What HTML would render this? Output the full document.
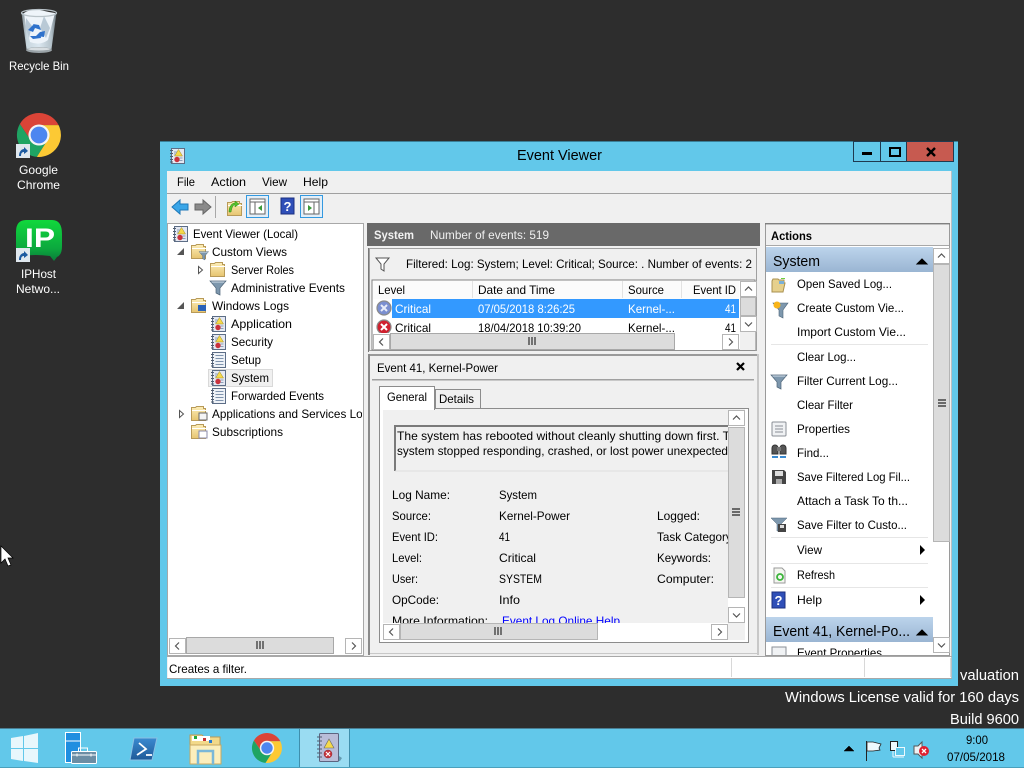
<!DOCTYPE html>
<html><head><meta charset="utf-8"><title>Event Viewer</title>
<style>
html,body{margin:0;padding:0;background:#2d2d2d;overflow:hidden}
svg{display:block;position:absolute;left:0;top:0}
text{font-family:"Liberation Sans",sans-serif;font-size:12px;fill:#000;white-space:pre}
.w{fill:#fff;font-size:12px}
.wm{fill:#fff;font-size:14.5px}
.b{font-weight:bold}
</style></head><body>
<svg width="1024" height="768" viewBox="0 0 1024 768" xmlns="http://www.w3.org/2000/svg">
<defs>
<linearGradient id="hd" x1="0" y1="0" x2="0" y2="1"><stop offset="0" stop-color="#bcd4ec"/><stop offset="1" stop-color="#9ab5d3"/></linearGradient>
<linearGradient id="fold" x1="0" y1="0" x2="0" y2="1"><stop offset="0" stop-color="#fdeeb8"/><stop offset="1" stop-color="#e6c470"/></linearGradient>
<linearGradient id="ipg" x1="0" y1="0" x2="0" y2="1"><stop offset="0" stop-color="#10d83c"/><stop offset=".7" stop-color="#0ca83e"/><stop offset="1" stop-color="#0a7c3a"/></linearGradient>
<linearGradient id="bin" x1="0" y1="0" x2="1" y2="0"><stop offset="0" stop-color="#7f8a90"/><stop offset=".15" stop-color="#c8d6de"/><stop offset=".5" stop-color="#dbe7f0"/><stop offset=".85" stop-color="#b4c2ca"/><stop offset="1" stop-color="#68737a"/></linearGradient>
<linearGradient id="pshell" x1="0" y1="0" x2="0" y2="1"><stop offset="0" stop-color="#3a8ad0"/><stop offset="1" stop-color="#1f5a98"/></linearGradient>
<clipPath id="c-tree"><rect x="168" y="224" width="194" height="412"/></clipPath>
<clipPath id="c-list"><rect x="372" y="281" width="367" height="52"/></clipPath>
<clipPath id="c-det"><rect x="383" y="410" width="345" height="213"/></clipPath>
<clipPath id="c-act"><rect x="766" y="247" width="167" height="408"/></clipPath>
<symbol id="chrome" viewBox="-1 -1 2 2" overflow="visible">
<path d="M.89-.45A1 1 0 0 0-.87-.5L-.39.22 0-.45Z" fill="#db4437"/>
<path d="M0-.45H.89A1 1 0 0 1-.1.995L.39.22Z" fill="#fcc934"/>
<path d="M-.87-.5A1 1 0 0 0-.1.995L.39.22 0 .45-.39.22Z" fill="#1fa463"/>
<circle r=".48" fill="#f4f4f4"/><circle r=".38" fill="#4d86f0"/>
</symbol>
<g id="sc"><rect width="14" height="14" fill="#dfe7ee"/><path d="M3 12C3 7 6 5 8 5V3l4 4-4 3V8C6 8 5 9 5 12Z" fill="#1c5aa0"/></g>
<g id="log"><rect x="1.500" y="0.500" width="13" height="15" fill="#e4e8f2" stroke="#5c6d86"/><path d="M0 2.500h3M0 5.500h3M0 8.500h3M0 11.500h3M0 14h3" stroke="#4e5b6e"/><path d="M8.500 1.500l4 6.500h-8Z" fill="#f5d94a" stroke="#a08a20" stroke-width=".5"/><path d="M4 4h3M4 6h2" stroke="#8ea0b8"/><circle cx="7" cy="11.500" r="2.700" fill="#c9323c"/><path d="M9.500 10h3M9.500 12.500h3" stroke="#8ea0b8"/></g>
<g id="logp"><rect x="1.500" y="0.500" width="13" height="15" fill="#eef2f7" stroke="#5c6d86"/><path d="M0 2.500h3M0 5.500h3M0 8.500h3M0 11.500h3M0 14h3" stroke="#4e5b6e"/><path d="M4.500 3.500h8M4.500 6.500h8M4.500 9.500h8M4.500 12.500h8" stroke="#7f93ad"/></g>
<g id="folder"><path d="M0.500 15.500V2.500h4l1-1h7v2h2v12Z" fill="url(#fold)" stroke="#b89a58"/><path d="M1 5.500H15" stroke="#fff"/></g>
<g id="fun"><path d="M0 1h16L10 8v7L6 13V8Z" fill="#7d97ad" stroke="#4d6478" stroke-width=".7"/><path d="M1.500 2h13" stroke="#d5e0ea"/></g>
<g id="fo"><path d="M0 0H13L8 6V13L5 11V6Z" fill="#fff" stroke="#555" stroke-width="1"/></g>
<g id="up"><rect x=".5" y=".5" width="16" height="15" fill="#fff" stroke="#b5b5b5"/><path d="M5 9.500l3.500-3.500 3.500 3.500" fill="none" stroke="#555" stroke-width="1.200"/></g>
<g id="dn"><rect x=".5" y=".5" width="16" height="15" fill="#fff" stroke="#b5b5b5"/><path d="M5 6.500l3.500 3.500 3.500-3.500" fill="none" stroke="#555" stroke-width="1.200"/></g>
<g id="lt"><rect x=".5" y=".5" width="16" height="15" fill="#fff" stroke="#b5b5b5"/><path d="M10 4.500l-3.500 3.500 3.500 3.500" fill="none" stroke="#555" stroke-width="1.200"/></g>
<g id="rt"><rect x=".5" y=".5" width="16" height="15" fill="#fff" stroke="#b5b5b5"/><path d="M7 4.500l3.500 3.500-3.500 3.500" fill="none" stroke="#555" stroke-width="1.200"/></g>
<g id="gh"><path d="M0 0v8M3 0v8M6 0v8" stroke="#444" stroke-width="1.400"/></g>
<g id="gv"><path d="M0 0h8M0 3h8M0 6h8" stroke="#444" stroke-width="1.400"/></g>
</defs>

<!-- desktop -->
<rect width="1024" height="768" fill="#2d2d2d"/>
<!-- recycle bin -->
<path d="M21.500 13L26.500 49Q39 54 51.500 49L56.500 13Z" fill="url(#bin)"/>
<path d="M24 13Q32 8 40 10T55 13L52 24 48 40Q40 46 30 42L26 26Z" fill="#eef4fa"/>
<path d="M44 16l6 12-4 10-6-10ZM26 18l6 8-3 12-3-10Z" fill="#b9c9d6"/>
<ellipse cx="39" cy="13" rx="17.500" ry="3.500" fill="none" stroke="#b8c2c8" stroke-width="1.300"/>
<path d="M28 30l5-5 3 1-3 6ZM33 24l6 1 2 5-6-2ZM40 32l1 6-8 1-3-3 6 0ZM37 36l3-4 5-1-1 6Z" fill="#2f72cc"/>
<ellipse cx="39" cy="50" rx="13" ry="3" fill="#9aa3a8"/><ellipse cx="39" cy="49" rx="11" ry="1.500" fill="#d8dee2"/>
<text class="w" x="9" y="70" textLength="60" lengthAdjust="spacingAndGlyphs">Recycle Bin</text>
<!-- chrome -->
<use href="#chrome" x="17" y="113" width="44" height="44"/>
<use href="#sc" x="16" y="144"/>
<text class="w" x="19" y="174" textLength="39" lengthAdjust="spacingAndGlyphs">Google</text>
<text class="w" x="17" y="189" textLength="43" lengthAdjust="spacingAndGlyphs">Chrome</text>
<!-- IPHost -->
<path d="M26 220H52Q62 220 62 234V246Q62 255 57 257L54 261 50 256Q34 254 24 256 16 256 16 248V232Q16 220 26 220Z" fill="url(#ipg)"/>
<text x="25" y="247" style="font-size:27px;font-weight:bold;fill:#fff" textLength="30" lengthAdjust="spacingAndGlyphs">IP</text>
<use href="#sc" x="16" y="248"/>
<text class="w" x="21" y="278" textLength="35" lengthAdjust="spacingAndGlyphs">IPHost</text>
<text class="w" x="16" y="293" textLength="44" lengthAdjust="spacingAndGlyphs">Netwo...</text>
<!-- cursor -->
<path d="M1 546V563L5 559 8 566 11 565 8 558H13Z" fill="#fff" stroke="#000" stroke-width=".7"/>
<!-- watermark -->
<text class="wm" x="960" y="680" textLength="59" lengthAdjust="spacingAndGlyphs">valuation</text>
<text class="wm" x="785" y="702" textLength="234" lengthAdjust="spacingAndGlyphs">Windows License valid for 160 days</text>
<text class="wm" x="950" y="724" textLength="69" lengthAdjust="spacingAndGlyphs">Build 9600</text>

<!-- window -->
<rect x="160" y="141" width="798" height="545" fill="#62c8ea"/>
<rect x="160" y="141" width="798" height="1" fill="#3a7f98"/>
<use href="#log" x="170" y="148"/>
<text x="517" y="160" style="font-size:14.5px" textLength="85" lengthAdjust="spacingAndGlyphs">Event Viewer</text>
<rect x="853.500" y="141.500" width="27" height="20" fill="#62c8ea" stroke="#1f3a50"/>
<rect x="880.500" y="141.500" width="26" height="20" fill="#62c8ea" stroke="#1f3a50"/>
<rect x="906.500" y="141.500" width="47" height="20" fill="#c75a50" stroke="#1f3a50"/>
<rect x="862" y="152" width="10" height="3" fill="#000"/>
<rect x="890" y="148" width="10" height="8" fill="none" stroke="#000" stroke-width="2"/>
<path d="M927 148l8 8M935 148l-8 8" stroke="#000" stroke-width="2.400"/>

<!-- client -->
<rect x="167" y="171" width="785" height="507" fill="#f0f0f0"/>
<rect x="167" y="193" width="785" height="1" fill="#a0a0a0"/>
<rect x="951" y="171" width="1" height="507" fill="#b8bfc4"/>
<text x="177" y="186" textLength="18" lengthAdjust="spacingAndGlyphs">File</text>
<text x="211" y="186" textLength="35" lengthAdjust="spacingAndGlyphs">Action</text>
<text x="262" y="186" textLength="25" lengthAdjust="spacingAndGlyphs">View</text>
<text x="303" y="186" textLength="25" lengthAdjust="spacingAndGlyphs">Help</text>

<!-- toolbar -->
<path d="M172 207l8-7v4h8v6h-8v4Z" fill="#3aa6e8" stroke="#1e78b8"/>
<path d="M211 207l-8-7v4h-8v6h8v4Z" fill="#8a8a8a" stroke="#666"/>
<rect x="215" y="196" width="1" height="22" fill="#a8a8a8"/>
<use href="#folder" x="227" y="200"/>
<path d="M229 212c0-6 3-9 6-9v-2l4 3-4 3v-2c-2 0-3 2-4 7Z" fill="#56c02c" stroke="#2d8a10" stroke-width=".5"/>
<rect x="246.500" y="195.500" width="22" height="22" fill="#e2eef8" stroke="#3399e0"/>
<rect x="250" y="199" width="15" height="15" fill="#fff" stroke="#666"/><path d="M250 202h15M255 202v12" stroke="#666"/><path d="M262 205v6l-4-3Z" fill="#3a9a3a"/>
<rect x="281" y="198" width="13" height="16" fill="#2f4fb8" stroke="#1b2f80"/>
<text x="283.500" y="211" style="font-size:13px;font-weight:bold;fill:#fff">?</text>
<rect x="300.500" y="195.500" width="22" height="22" fill="#e2eef8" stroke="#3399e0"/>
<rect x="304" y="199" width="15" height="15" fill="#fff" stroke="#666"/><path d="M304 202h15M314 202v12" stroke="#666"/><path d="M308 205v6l4-3Z" fill="#3a9a3a"/>

<!-- tree pane -->
<rect x="167.500" y="223.500" width="196" height="432" fill="#fff" stroke="#a8a8a8"/>
<rect x="208.500" y="369.500" width="64" height="17" fill="#f0f0f0" stroke="#d9d9d9"/>
<g clip-path="url(#c-tree)">
<use href="#log" x="173" y="226"/><text x="193" y="238" textLength="105" lengthAdjust="spacingAndGlyphs">Event Viewer (Local)</text>
<path d="M184 248v7h-7Z" fill="#555"/>
<use href="#folder" x="191" y="243"/><use href="#fun" transform="translate(199 251) scale(.6)"/><text x="212" y="256" textLength="75" lengthAdjust="spacingAndGlyphs">Custom Views</text>
<path d="M198.500 266.500v7l4-3.500Z" fill="#fff" stroke="#555"/>
<use href="#folder" x="210" y="261"/><text x="231" y="274" textLength="63" lengthAdjust="spacingAndGlyphs">Server Roles</text>
<use href="#fun" x="210" y="280"/><text x="231" y="292" textLength="114" lengthAdjust="spacingAndGlyphs">Administrative Events</text>
<path d="M184 302v7h-7Z" fill="#555"/>
<use href="#folder" x="191" y="297"/><rect x="198" y="305" width="8" height="6" fill="#2a62b8"/><text x="212" y="310" textLength="77" lengthAdjust="spacingAndGlyphs">Windows Logs</text>
<use href="#log" x="211" y="316"/><text x="231" y="328" textLength="61" lengthAdjust="spacingAndGlyphs">Application</text>
<use href="#log" x="211" y="334"/><text x="231" y="346" textLength="42" lengthAdjust="spacingAndGlyphs">Security</text>
<use href="#logp" x="211" y="352"/><text x="231" y="364" textLength="30" lengthAdjust="spacingAndGlyphs">Setup</text>
<use href="#log" x="211" y="370"/><text x="231" y="382" textLength="38" lengthAdjust="spacingAndGlyphs">System</text>
<use href="#logp" x="211" y="388"/><text x="231" y="400" textLength="93" lengthAdjust="spacingAndGlyphs">Forwarded Events</text>
<path d="M179.500 410.500v7l4-3.500Z" fill="#fff" stroke="#555"/>
<use href="#folder" x="191" y="405"/><rect x="199" y="413" width="8" height="7" fill="#f4f4f4" stroke="#666"/><text x="212" y="418" textLength="163" lengthAdjust="spacingAndGlyphs">Applications and Services Logs</text>
<use href="#folder" x="191" y="423"/><rect x="199" y="431" width="8" height="7" fill="#fff" stroke="#88a"/><text x="212" y="436" textLength="71" lengthAdjust="spacingAndGlyphs">Subscriptions</text>
</g>
<rect x="168" y="637" width="194" height="17" fill="#fff"/>
<use href="#lt" x="169" y="638"/>
<rect x="186.500" y="637.500" width="147" height="16" fill="#dcdcdc" stroke="#a8a8a8"/>
<use href="#gh" x="257" y="641"/>
<use href="#rt" x="345" y="638"/>

<!-- middle header -->
<rect x="367" y="223" width="393" height="23" fill="#696969"/>
<text class="b" x="374" y="239" style="fill:#f2f2f2" textLength="40" lengthAdjust="spacingAndGlyphs">System</text>
<text x="430" y="239" style="fill:#f0f0f0" textLength="119" lengthAdjust="spacingAndGlyphs">Number of events: 519</text>

<!-- filter pane -->
<rect x="369.500" y="248.500" width="387" height="102" fill="#f0f0f0" stroke="#a0a0a0"/>
<rect x="368" y="248" width="1" height="104" fill="#777"/>
<use href="#fo" x="376" y="258"/>
<text x="406" y="268" textLength="346" lengthAdjust="spacingAndGlyphs">Filtered: Log: System; Level: Critical; Source: . Number of events: 2</text>
<rect x="372" y="280" width="383" height="70" fill="#fff" stroke="#808080"/>
<g clip-path="url(#c-list)">
<rect x="373" y="281" width="366" height="18" fill="#fbfbfb"/>
<path d="M472.500 281v17M622.500 281v17M681.500 281v17" stroke="#e2e2e2"/>
<text x="378" y="294" textLength="27" lengthAdjust="spacingAndGlyphs">Level</text>
<text x="478" y="294" textLength="77" lengthAdjust="spacingAndGlyphs">Date and Time</text>
<text x="628" y="294" textLength="36" lengthAdjust="spacingAndGlyphs">Source</text>
<text x="693" y="294" textLength="43" lengthAdjust="spacingAndGlyphs">Event ID</text>
<rect x="392" y="299" width="347" height="19" fill="#3399ff"/>
<circle cx="384" cy="308" r="7" fill="#7b8fd0" stroke="#8a8a8a" stroke-width="1.200"/>
<path d="M381 305l6 6M387 305l-6 6" stroke="#e8ecf8" stroke-width="2"/>
<text class="w" x="395" y="313" textLength="36" lengthAdjust="spacingAndGlyphs">Critical</text>
<text class="w" x="478" y="313" textLength="97" lengthAdjust="spacingAndGlyphs">07/05/2018 8:26:25</text>
<text class="w" x="628" y="313" textLength="47" lengthAdjust="spacingAndGlyphs">Kernel-...</text>
<text class="w" x="725" y="313" textLength="11" lengthAdjust="spacingAndGlyphs">41</text>
<circle cx="384" cy="327" r="7" fill="#d0202e" stroke="#8a8a8a" stroke-width="1.200"/>
<path d="M381 324l6 6M387 324l-6 6" stroke="#fff" stroke-width="2"/>
<text x="395" y="332" textLength="36" lengthAdjust="spacingAndGlyphs">Critical</text>
<text x="478" y="332" textLength="103" lengthAdjust="spacingAndGlyphs">18/04/2018 10:39:20</text>
<text x="628" y="332" textLength="47" lengthAdjust="spacingAndGlyphs">Kernel-...</text>
<text x="725" y="332" textLength="11" lengthAdjust="spacingAndGlyphs">41</text>
</g>
<rect x="373" y="333" width="366" height="17" fill="#fff"/>
<use href="#lt" x="373" y="334"/>
<rect x="390.500" y="333.500" width="284" height="16" fill="#dcdcdc" stroke="#a8a8a8"/>
<use href="#gh" x="529" y="337"/>
<use href="#rt" x="722" y="334"/>
<rect x="740" y="281" width="15" height="69" fill="#f0f0f0"/>
<use href="#up" transform="translate(740 281)"/>
<rect x="740.500" y="297.500" width="15" height="18" fill="#dcdcdc" stroke="#b5b5b5"/>
<use href="#dn" transform="translate(740 316)"/>

<!-- details pane -->
<rect x="369" y="354" width="388" height="2" fill="#9a9a9a"/>
<rect x="368" y="354" width="2" height="301" fill="#8a8a8a"/>
<rect x="757" y="354" width="2" height="301" fill="#c8c8c8"/>
<rect x="370" y="653" width="387" height="1" fill="#c8c8c8"/>
<text x="377" y="372" textLength="121" lengthAdjust="spacingAndGlyphs">Event 41, Kernel-Power</text>
<path d="M737 363l7 7M744 363l-7 7" stroke="#000" stroke-width="2.200"/>
<rect x="372" y="379" width="382" height="1.500" fill="#a0a0a0"/>
<rect x="379.500" y="408.500" width="369" height="234" fill="#f0f0f0" stroke="#8c8c8c"/>
<rect x="435.500" y="389.500" width="45" height="19" fill="#f0f0f0" stroke="#8c8c8c"/>
<rect x="379.500" y="386.500" width="55" height="24" fill="#fff" stroke="#8c8c8c"/>
<rect x="380" y="408" width="54" height="3" fill="#fff"/>
<rect x="383" y="410" width="345" height="213" fill="#f0f0f0"/>
<rect x="380" y="409" width="3" height="233" fill="#fff"/>
<rect x="380" y="640" width="368" height="2" fill="#fff"/>
<rect x="745" y="409" width="3" height="233" fill="#fff"/>
<text x="387" y="401" textLength="40" lengthAdjust="spacingAndGlyphs">General</text>
<text x="439" y="403" textLength="35" lengthAdjust="spacingAndGlyphs">Details</text>
<g clip-path="url(#c-det)">
<rect x="394" y="425" width="340" height="46" fill="#f0f0f0"/>
<path d="M395 471V426H734" fill="none" stroke="#7a7a7a" stroke-width="2"/>
<path d="M395 471H734" stroke="#dedede"/>
<text x="397" y="440" textLength="333" lengthAdjust="spacingAndGlyphs">The system has rebooted without cleanly shutting down first. T</text>
<text x="397" y="455" textLength="331" lengthAdjust="spacingAndGlyphs">system stopped responding, crashed, or lost power unexpected</text>
<text x="392" y="499" textLength="58" lengthAdjust="spacingAndGlyphs">Log Name:</text><text x="499" y="499" textLength="38" lengthAdjust="spacingAndGlyphs">System</text>
<text x="392" y="520" textLength="39" lengthAdjust="spacingAndGlyphs">Source:</text><text x="499" y="520" textLength="71" lengthAdjust="spacingAndGlyphs">Kernel-Power</text><text x="657" y="520" textLength="43" lengthAdjust="spacingAndGlyphs">Logged:</text>
<text x="392" y="541" textLength="46" lengthAdjust="spacingAndGlyphs">Event ID:</text><text x="499" y="541" textLength="11" lengthAdjust="spacingAndGlyphs">41</text><text x="657" y="541" textLength="78" lengthAdjust="spacingAndGlyphs">Task Category:</text>
<text x="392" y="562" textLength="30" lengthAdjust="spacingAndGlyphs">Level:</text><text x="499" y="562" textLength="37" lengthAdjust="spacingAndGlyphs">Critical</text><text x="657" y="562" textLength="54" lengthAdjust="spacingAndGlyphs">Keywords:</text>
<text x="392" y="583" textLength="26" lengthAdjust="spacingAndGlyphs">User:</text><text x="499" y="583" textLength="43" lengthAdjust="spacingAndGlyphs">SYSTEM</text><text x="657" y="583" textLength="57" lengthAdjust="spacingAndGlyphs">Computer:</text>
<text x="392" y="604" textLength="47" lengthAdjust="spacingAndGlyphs">OpCode:</text><text x="499" y="604" textLength="21" lengthAdjust="spacingAndGlyphs">Info</text>
<text x="392" y="625" textLength="96" lengthAdjust="spacingAndGlyphs">More Information:</text><text x="502" y="625" style="fill:#0000ff;text-decoration:underline" textLength="118" lengthAdjust="spacingAndGlyphs">Event Log Online Help</text>
</g>
<rect x="728" y="410" width="17" height="213" fill="#fff"/>
<use href="#up" x="728" y="410"/>
<rect x="728.500" y="427.500" width="16" height="170" fill="#dcdcdc" stroke="#b5b5b5"/>
<use href="#gv" x="732" y="509"/>
<use href="#dn" x="728" y="607"/>
<rect x="383" y="623" width="345" height="17" fill="#fff"/>
<use href="#lt" x="383" y="624"/>
<rect x="400.500" y="623.500" width="197" height="16" fill="#dcdcdc" stroke="#b5b5b5"/>
<use href="#gh" x="495" y="627"/>
<use href="#rt" x="711" y="624"/>

<!-- actions pane -->
<rect x="765.500" y="223.500" width="184" height="432" fill="#fff" stroke="#9a9a9a"/>
<rect x="765" y="223" width="185" height="1.500" fill="#808080"/>
<rect x="766" y="225" width="183" height="20" fill="#f0f0f0"/>
<rect x="766" y="245" width="183" height="1" fill="#a8a8a8"/>
<text class="b" x="771" y="240" textLength="41" lengthAdjust="spacingAndGlyphs">Actions</text>
<g clip-path="url(#c-act)">
<rect x="766" y="247" width="167" height="25" fill="url(#hd)"/>
<text x="773" y="266" style="font-size:14.5px" textLength="47" lengthAdjust="spacingAndGlyphs">System</text>
<path d="M917 264l5-5 5 5Z" fill="#000" stroke="#000"/>
<path d="M772 292v-11l1-2h5l1 1h5v3h1l-2 9Z" fill="#e6d08c" stroke="#a89050"/><rect x="779" y="281" width="5" height="3" fill="#7ab0d8"/><rect x="781" y="278" width="4" height="1" fill="#6cd040"/>
<text x="797" y="288" textLength="95" lengthAdjust="spacingAndGlyphs">Open Saved Log...</text>
<path d="M773 303h15l-5 7v8l-4-2v-6Z" fill="#7d97ad" stroke="#4d6478" stroke-width=".6"/><circle cx="777" cy="305" r="3.500" fill="#f8b418"/>
<text x="797" y="312" textLength="107" lengthAdjust="spacingAndGlyphs">Create Custom Vie...</text>
<text x="797" y="336" textLength="109" lengthAdjust="spacingAndGlyphs">Import Custom Vie...</text>
<rect x="771" y="344" width="157" height="1" fill="#e6e6e6"/>
<text x="797" y="361" textLength="59" lengthAdjust="spacingAndGlyphs">Clear Log...</text>
<use href="#fun" x="771" y="374"/>
<text x="797" y="385" textLength="101" lengthAdjust="spacingAndGlyphs">Filter Current Log...</text>
<text x="797" y="409" textLength="56" lengthAdjust="spacingAndGlyphs">Clear Filter</text>
<rect x="772" y="422" width="14" height="14" rx="1" fill="#f0f2f4" stroke="#8a8f96"/><path d="M775 426h8M775 429h8M775 432h8" stroke="#8a8f96"/>
<text x="797" y="433" textLength="53" lengthAdjust="spacingAndGlyphs">Properties</text>
<path d="M772 448a3 3 0 0 1 6 0v6h-6ZM780 448a3 3 0 0 1 6 0v6h-6Z" fill="#555" stroke="#333"/><rect x="777" y="447" width="4" height="4" fill="#777"/><path d="M772 457h6M780 457h6" stroke="#3a8ad0" stroke-width="2"/>
<text x="797" y="457" textLength="32" lengthAdjust="spacingAndGlyphs">Find...</text>
<path d="M772 470h12l2 2v12h-14Z" fill="#444"/><rect x="775" y="471" width="8" height="5" fill="#ddd"/><rect x="776" y="479" width="6" height="5" fill="#aaa"/>
<text x="797" y="481" textLength="113" lengthAdjust="spacingAndGlyphs">Save Filtered Log Fil...</text>
<text x="797" y="505" textLength="111" lengthAdjust="spacingAndGlyphs">Attach a Task To th...</text>
<path d="M771 518h16l-6 6v7h-4v-7Z" fill="#7d97ad" stroke="#4d6478" stroke-width=".5"/><rect x="778" y="524" width="8" height="8" fill="#444"/><rect x="780" y="525" width="4" height="3" fill="#ddd"/>
<text x="797" y="529" textLength="110" lengthAdjust="spacingAndGlyphs">Save Filter to Custo...</text>
<rect x="771" y="537" width="157" height="1" fill="#e6e6e6"/>
<text x="797" y="554" textLength="25" lengthAdjust="spacingAndGlyphs">View</text>
<path d="M920 545v10l5-5Z" fill="#000"/>
<rect x="771" y="563" width="157" height="1" fill="#e6e6e6"/>
<path d="M774 568h8l3 3v12h-11Z" fill="#f4f6f0" stroke="#9a9a9a"/><circle cx="780" cy="577" r="3" fill="none" stroke="#3cb43c" stroke-width="1.800"/>
<text x="797" y="579" textLength="38" lengthAdjust="spacingAndGlyphs">Refresh</text>
<rect x="771" y="587" width="157" height="1" fill="#e6e6e6"/>
<rect x="772" y="592" width="13" height="16" fill="#2f4fb8" stroke="#1b2f80"/>
<text x="774.500" y="605" style="font-size:13px;font-weight:bold;fill:#fff">?</text>
<text x="797" y="604" textLength="25" lengthAdjust="spacingAndGlyphs">Help</text>
<path d="M920 595v10l5-5Z" fill="#000"/>
<rect x="766" y="617" width="167" height="25" fill="url(#hd)"/>
<text x="773" y="636" style="font-size:14.5px" textLength="137" lengthAdjust="spacingAndGlyphs">Event 41, Kernel-Po...</text>
<path d="M917 635l5-5 5 5Z" fill="#000" stroke="#000"/>
<rect x="772" y="647" width="14" height="14" fill="#f0f2f4" stroke="#8a8f96"/>
<text x="797" y="657" textLength="85" lengthAdjust="spacingAndGlyphs">Event Properties</text>
</g>
<rect x="933" y="247" width="16" height="408" fill="#fff"/>
<use href="#up" x="933" y="248"/>
<rect x="933.500" y="264.500" width="16" height="277" fill="#dcdcdc" stroke="#b5b5b5"/>
<use href="#gv" x="938" y="400"/>
<use href="#dn" x="933" y="637"/>

<!-- status bar -->
<rect x="167" y="656" width="785" height="1" fill="#a8a8a8"/>
<rect x="168" y="657" width="783" height="21" fill="#fff"/>
<rect x="167" y="678" width="785" height="1" fill="#a8a8a8"/>
<rect x="731" y="658" width="1" height="19" fill="#d8d8d8"/>
<rect x="864" y="658" width="1" height="19" fill="#d8d8d8"/>
<rect x="950" y="658" width="1" height="19" fill="#d8d8d8"/>
<text x="169" y="673" textLength="78" lengthAdjust="spacingAndGlyphs">Creates a filter.</text>

<!-- taskbar -->
<rect x="0" y="728" width="1024" height="40" fill="#62c8ea"/>
<rect x="0" y="728" width="1024" height="1" fill="#4a7f94"/>
<rect x="0" y="767" width="1024" height="1" fill="#4aa0bc"/>
<rect x="299" y="729" width="50" height="38" fill="#9adcf2"/>
<rect x="299" y="729" width="1" height="38" fill="#3f8fac"/><rect x="349" y="729" width="1" height="38" fill="#3f8fac"/>
<path d="M11 738l12-2v12H11ZM24 736l14-3v15H24ZM11 749h12v12l-12-2ZM24 749h14v14l-14-2Z" fill="#e8f7fc"/>
<!-- server manager -->
<rect x="65.500" y="732.500" width="15" height="30" fill="#1f8ee0" stroke="#fff"/><path d="M66 741h14" stroke="#fff"/>
<rect x="71.500" y="751.500" width="25" height="12" rx="1" fill="#6b8da4" stroke="#fff"/><path d="M78.500 751v-3h9v3" fill="none" stroke="#fff"/><path d="M72 755h24" stroke="#fff"/><path d="M77 753.500v3M91 753.500v3" stroke="#fff"/>
<!-- powershell -->
<path d="M134 738h23l-5 22h-22Z" fill="url(#pshell)" stroke="#8ac0e4"/><path d="M139 743l7 6-9 6M146 755h6" fill="none" stroke="#fff" stroke-width="1.800"/>
<!-- explorer -->
<path d="M190 764V735h12l2 2h16v27Z" fill="#f2d98a" stroke="#b89a58"/>
<rect x="192" y="736" width="18" height="5" fill="#fff"/><rect x="194" y="736" width="3" height="3" fill="#1ca83c"/><rect x="203" y="738" width="3" height="3" fill="#c83030"/><rect x="209" y="740" width="3" height="3" fill="#2a7ad0"/>
<rect x="190" y="745" width="31" height="19" fill="#fbeebc" stroke="#c8a860"/>
<path d="M198 764v-13h15v13" fill="none" stroke="#7ab8d8" stroke-width="2.500"/>
<use href="#chrome" x="252" y="733" width="30" height="30"/>
<!-- event viewer task icon -->
<path d="M322 762l18-1 2-3-3-2Z" fill="#4a7f94" opacity=".7"/>
<rect x="319.500" y="733.500" width="19" height="28" rx="1" fill="#b9bdd8" stroke="#5c6480"/>
<path d="M317 737h5M317 741h5M317 745h5M317 749h5M317 753h5M317 757h5" stroke="#4e5b6e"/>
<path d="M329 739l5 9h-10Z" fill="#f5d94a" stroke="#666" stroke-width=".6"/>
<circle cx="328" cy="754" r="4" fill="#c9323c" stroke="#8a2a30" stroke-width=".5"/><path d="M326 752l4 4M330 752l-4 4" stroke="#fff" stroke-width="1.200"/>
<!-- tray -->
<path d="M844 751l5-5 5 5Z" fill="#000" stroke="#000" stroke-width=".5"/>
<path d="M867 742h6l8 2-2 4 1 2-7 1h-6Z" fill="#eef9fd" stroke="#222" stroke-width=".8"/><path d="M866.500 741v20" stroke="#222"/>
<rect x="890.500" y="741.500" width="7" height="9" fill="#eef9fd" stroke="#222"/><rect x="895.500" y="747.500" width="9" height="8" fill="#62c8ea" stroke="#eef9fd"/><path d="M893 751v6M893 757h11" stroke="#eef9fd"/>
<path d="M914 746v8h4l4 4v-16l-4 4Z" fill="#eef2f4" stroke="#555"/>
<circle cx="924" cy="751" r="5" fill="#e02030"/><path d="M922 749l4 4M926 749l-4 4" stroke="#fff" stroke-width="1.300"/>
<text x="966" y="744" textLength="22" lengthAdjust="spacingAndGlyphs">9:00</text>
<text x="947" y="761" textLength="58" lengthAdjust="spacingAndGlyphs">07/05/2018</text>
</svg>
</body></html>
